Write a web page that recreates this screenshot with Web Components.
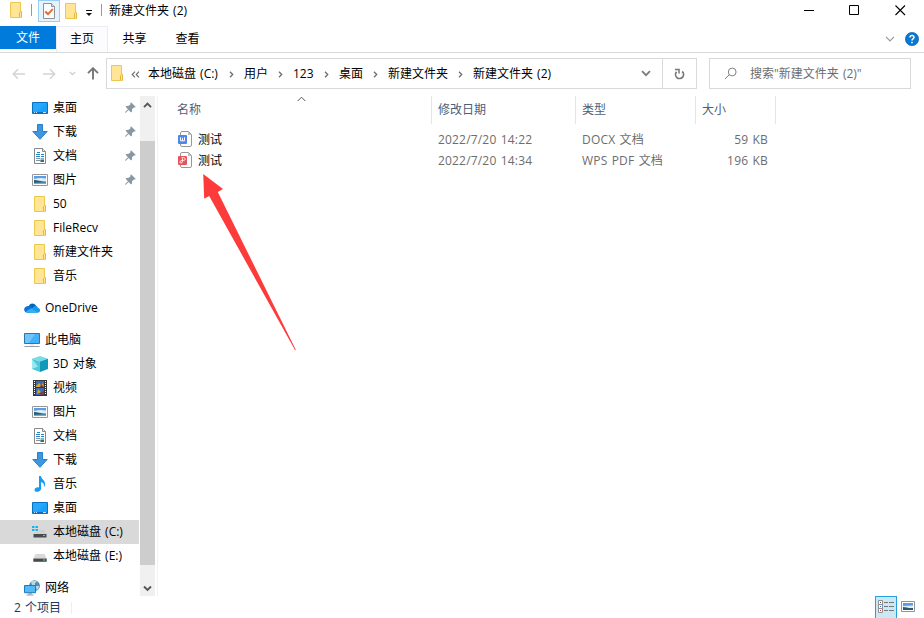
<!DOCTYPE html>
<html lang="zh-CN">
<head>
<meta charset="utf-8">
<title>新建文件夹 (2)</title>
<style>
  html, body { margin: 0; height: 100%; overflow: hidden; background: #fff; }
  body { font: 12px/16px "Open Sans", "Noto Sans CJK SC", sans-serif; word-spacing: 1px; color: #000; }
</style>
</head>
<body>
<file-explorer></file-explorer>

<script>
  const folder = `<path d="M2.500.5h10v9.500l1 .8v4.700h-11z" fill="#ffe595" stroke="#edc84f"/><path d="M11.500 15v-4.500l1-1h1v6" fill="#ffe595" stroke="#e3b93c"/>`;
  const pages = `<path d="M2.500.5h8l3 3v12h-11z" fill="#fff" stroke="#85898c"/><path d="M10.500.5v3h3" fill="#e8e8e8" stroke="#85898c"/><path d="M4 6.500h4M5 4.500h3M4 8.500h4M9 6.500h3M9 8.500h3" stroke="#2585c7"/><path d="M4 10.500h4M4 12.500h4" stroke="#87939b"/><path d="M8.500 10h3.500v4H8.500z" fill="#78b7dc"/><path d="M8.500 12h3.500v2H8.500z" fill="#3c6f6b"/>`;
  const picture = `<path d="M.5 2.500h15v11H.5z" fill="#fff" stroke="#979797"/><path d="M2 4h12v8H2z" fill="#dceefa"/><path d="M2 4h12v2.500C9 5.500 6 6 2 7z" fill="#5e9be2"/><path d="M2 8c4 0 6 1.500 12 1.500V12H2z" fill="#2d6273"/><path d="M2 11c4-.7 8-.7 12-.5V12H2z" fill="#69aedb"/>`;

  // [viewBox width, viewBox height, markup]
  const ICONS = {
    folder: [16, 16, folder],
    desktop: [16, 16, `<path d="M.5 2.500h15v11H.5z" fill="#1aa1fa" stroke="#0873bd"/><path d="M2 3h12L5 12H1V3z" fill="#35b0ff" opacity=".5"/><path d="M1 12.500h14" stroke="#0a6fc0"/><path d="M2 12.500h1m1 0h1m6 0h3" stroke="#bce4ff"/>`],
    download: [16, 16, `<path d="M5.500.5h5v7h4.700L8 15.300.8 7.500h4.700z" fill="#3c96e0" stroke="#2a7fca"/>`],
    document: [16, 16, pages],
    picture: [16, 16, picture],
    onedrive: [16, 16, `<path d="M4.500 6.700C5.500 3 10 2 12 5.800l-2.500 4z" fill="#0864b8"/><path d="M3.800 12.800C-.8 12.800-1 7 3 6.300c2-.8 3.800 0 5 1l4 3-2 2z" fill="#0f76cf"/><path d="M9 7.500c2-2.600 4.500-1.800 4.700.2C17 8.200 16.700 12.800 13.500 12.800H3.300C3.500 10.500 6 9.200 9 7.500z" fill="#1f96e6"/><path d="M2 12c1-2 4-2.700 5.500-3.500l6.500 4c-2 .5-7 .4-10 .3z" fill="#2fb1f2"/>`],
    computer: [16, 16, `<path d="M.5 1.500h15v10H.5z" fill="#45b1fa" stroke="#2878ad"/><path d="M1 2h10l-6 9H1z" fill="#8ad0fb" opacity=".6"/><path d="M6 12h4v1.500H6z" fill="#dfe6ea"/><path d="M.5 14.500h15" stroke="#8f9da6"/>`],
    cube: [16, 16, `<path d="M8 0l8 2.800L8 5.500 0 2.800z" fill="#78dce6"/><path d="M0 2.800l8 2.700V16l-8-3z" fill="#50c9d6"/><path d="M16 2.800L8 5.500V16l8-3z" fill="#1298bb"/><path d="M0 3l6 7.500L0 13z" fill="#9ce8ef"/>`],
    video: [16, 16, `<path d="M1 0h14v16H1z" fill="#373737"/><path d="M4 1h8v6H4z" fill="#3d6ab7"/><path d="M4 8h8v7H4z" fill="#396db4"/><path d="M4 6l3-3 2 2 2-2 1 4H4zM6 9l3 3-4 2z" fill="#d6a62f"/><path d="M9 4l3 3H8zM8 13l4-2v4H8z" fill="#793f44"/><path d="M2.500 1v14M13.500 1v14" stroke="#fff" stroke-dasharray="1 1"/>`],
    music: [16, 16, `<path d="M7 0h2c.3 3.500 4.500 4 4 9-.3 1.400-.8 1.800-1.200 2C12.500 8 11 6.500 9 6v7c-.3 3-6 4-6.500 1.300C2.400 12 5 11 7 11.500z" fill="#169cf3"/>`],
    sysdrive: [16, 16, `<path d="M0 2h2.500v2H0zM3.500 2H6v2H3.500zM0 5h2.500v2H0zM3.500 5H6v2H3.500z" fill="#17b3ef"/><path d="M6.500 6h6l2 4h-13L3 8h3.500z" fill="#cfd1d2"/><path d="M1.500 10h13v3.500h-13z" fill="#484c4e"/><path d="M11 11.500h2" stroke="#4fdc74"/>`],
    drive: [16, 16, `<path d="M3.500 6h9l2 4.500h-13z" fill="#d7d9da"/><path d="M1.300 10.500h13.400v3.300H1.300z" fill="#484b4d"/><path d="M11 12h2" stroke="#4fdc74"/>`],
    network: [16, 16, `<circle cx="10.500" cy="5.700" r="5.400" fill="#4f8cb4"/><path d="M7 2c2-2 5-1 6 0l-2 1v2H8zM11 6h4c0 2-1 3-2 4z" fill="#bbd9e1"/><path d="M.5 5.500h11v7.200H.5z" fill="#53bafa" stroke="#1e7bbb"/><path d="M4 13h4v1.500H4z" fill="#9bb1bd"/><path d="M2.500 15h7" stroke="#8aa0ad"/>`],
    pin: [11, 11, `<path d="M6 .2L10.800 5l-1 .6-1-.1-1.700 1.800-.1 2.200-.9.900L3.600 7.900.8 10.700H.2v-.6L3 7.300.6 4.800l.9-.9 2.200-.1L5.500 2.200 5.400 1z" fill="#8798a4"/>`],
    check: [12, 16, `<path d="M.5.5h8l3 3v12H.5z" fill="#f9fafb" stroke="#8b9297"/><path d="M8.500.5v3h3" fill="#ddd" stroke="#8b9297"/><path d="M2.300 8.500L5 11.200 9.800 6" fill="none" stroke="#e96325" stroke-width="1.800"/>`],
    caret: [7, 7, `<path d="M0 1.500h6" stroke="#111"/><path d="M0 4h6L3 7z" fill="#111"/>`],
    back: [14, 12, `<path d="M13 6H1.500M6 1.300L1.300 6 6 10.700" fill="none" stroke="#d4d4d4" stroke-width="1.500"/>`],
    forward: [14, 12, `<path d="M1 6h11.500M8 1.300L12.700 6 8 10.700" fill="none" stroke="#d4d4d4" stroke-width="1.500"/>`],
    up: [12, 13, `<path d="M6 12.500V1.500M1 6.200L6 1.200l5 5" fill="none" stroke="#767676" stroke-width="1.900"/>`],
    tiny: [7, 5, `<path d="M.7.8l2.800 2.900L6.300.8" fill="none" stroke="#cacaca" stroke-width="1.200"/>`],
    crumb: [5, 7, `<path d="M1 .8l2.700 2.700L1 6.200" fill="none" stroke="#6e6e6e" stroke-width="1.300"/>`],
    more: [9, 7, `<path d="M4 .7L1.200 3.500 4 6.300M8 .7L5.200 3.500 8 6.300" fill="none" stroke="#6a6a6a" stroke-width="1.100"/>`],
    drop: [10, 7, `<path d="M1 1.200l4 4 4-4" fill="none" stroke="#7c7c7c" stroke-width="1.800"/>`],
    thindrop: [10, 6, `<path d="M1 .8l4 4 4-4" fill="none" stroke="#999" stroke-width="1.200"/>`],
    refresh: [11, 12, `<path d="M8.200 3.500A4 4 0 1 1 2.500 3.900" fill="none" stroke="#767676" stroke-width="1.700"/><path d="M1 1.500h4v4" fill="none" stroke="#767676" stroke-width="1.500"/>`],
    search: [14, 14, `<circle cx="8.200" cy="5" r="3.900" fill="none" stroke="#808080"/><path d="M5.300 7.800L1 12" stroke="#808080"/>`],
    help: [14, 14, `<circle cx="7" cy="7" r="6.600" fill="#0878d2" stroke="#0863b2" stroke-width=".7"/><path d="M5 5.500c0-2.900 4.200-2.600 4 0C8.900 6.900 7 6.900 7 8.500M7 9.700v1.500" fill="none" stroke="#fff" stroke-width="1.500"/>`],
    minimize: [11, 11, `<path d="M1 5.500h10" stroke="#000"/>`],
    maximize: [11, 11, `<path d="M.5.500h9v9h-9z" fill="none" stroke="#000"/>`],
    close: [11, 11, `<path d="M.5.500l9.500 9.500M10 .5L.5 10" stroke="#000" stroke-width="1.100"/>`],
    sort: [9, 6, `<path d="M.7 5l3.800-3.800L8.300 5" fill="none" stroke="#555"/>`],
    scrollup: [9, 7, `<path d="M1 5.200l3.500-3.500L8 5.200" fill="none" stroke="#555" stroke-width="1.900"/>`],
    scrolldown: [9, 7, `<path d="M1 1.500L4.500 5 8 1.500" fill="none" stroke="#555" stroke-width="1.900"/>`],
    docx: [15, 16, `<path d="M2.500 4V2q0-1.500 1.500-1.500h6.500l3 3v10.500q0 1.500-1.500 1.500H4q-1.500 0-1.500-1.500v-1" fill="#fff" stroke="#979797"/><path d="M10 .5v3.500h3.500z" fill="#bbb"/><rect y="4" width="9" height="9" rx="1" fill="#4c87ef"/><path d="M2.500 6.200v3.600h4V6.200M4.500 6.800v3" fill="none" stroke="#fff"/>`],
    pdf: [15, 16, `<path d="M2.500 4V2q0-1.500 1.500-1.500h6.500l3 3v10.500q0 1.500-1.500 1.500H4q-1.500 0-1.500-1.500v-1" fill="#fff" stroke="#979797"/><path d="M10 .5v3.500h3.500z" fill="#bbb"/><rect y="4" width="9" height="9" rx="1" fill="#e9545b"/><path d="M3.500 5.700h2.200c2 0 2 2.700 0 2.700H4.500C1.500 8.500 1.300 11 3 11s1.500-2 1.500-4.500" fill="none" stroke="#fff" stroke-width=".9"/>`],
    details: [16, 14, `<path d="M.5.500h4v12h-4zM.5 4.500h4M.5 8.500h4" fill="#fff" stroke="#929292"/><path d="M2 2.500h1" stroke="#555"/><path d="M2 6.500h1" stroke="#2a70df"/><path d="M2 10.500h1" stroke="#d52d2d"/><path d="M6 2.500h4m1 0h5M6 6.500h4m1 0h5M6 10.500h4m1 0h5" stroke="#777"/>`],
    thumbs: [14, 11, `<path d="M.5.500h13v10H.5z" fill="#fff" stroke="#929292"/><path d="M2 2h10v7H2z" fill="#deedf8"/><path d="M2 2h10v2.500L2 5z" fill="#5b9de4"/><path d="M2 6c3 0 5 1.300 10 1v2H2z" fill="#31566d"/>`]
  };

  class UiIcon extends HTMLElement {
    connectedCallback() {
      const [w, h, body] = ICONS[this.getAttribute('name')];
      this.attachShadow({ mode: 'open' }).innerHTML = `
        <style>
          :host { display: block; flex: none; width: ${w}px; height: ${h}px; }
          svg { display: block; }
        </style>
        <svg width="${w}" height="${h}" viewBox="0 0 ${w} ${h}">${body}</svg>`;
    }
  }
  customElements.define('ui-icon', UiIcon);

  class TitleBar extends HTMLElement {
    connectedCallback() {
      this.attachShadow({ mode: 'open' }).innerHTML = `
        <style>
          :host { display: flex; height: 26px; align-items: flex-start; }
          .quick { display: flex; flex: 1; height: 22px; align-items: center; padding-left: 8px; }
          .sep { width: 1px; height: 12px; margin-bottom: 2px; background: #999; }
          .sep.first { margin-left: 7px; margin-right: 6px; }
          .props { display: flex; width: 20px; height: 20px; border: 1px solid #99cdf5; background: #e6f3fd; align-items: center; justify-content: center; }
          .props + ui-icon { margin: 0 7px 0 3px; }
          .sep.last { margin-left: 8px; margin-right: 7px; }
          .buttons { display: flex; gap: 35px; padding: 5px 18px 0 0; }
        </style>
        <div class="quick">
          <ui-icon name="folder" style="margin-bottom:2px"></ui-icon>
          <span class="sep first"></span>
          <span class="props"><ui-icon name="check"></ui-icon></span>
          <ui-icon name="folder"></ui-icon>
          <ui-icon name="caret" style="margin-top:2px"></ui-icon>
          <span class="sep last"></span>
          <slot></slot>
        </div>
        <div class="buttons">
          <ui-icon name="minimize"></ui-icon>
          <ui-icon name="maximize"></ui-icon>
          <ui-icon name="close"></ui-icon>
        </div>`;
    }
  }
  customElements.define('title-bar', TitleBar);

  class RibbonTabs extends HTMLElement {
    connectedCallback() {
      this.attachShadow({ mode: 'open' }).innerHTML = `
        <style>
          :host { display: flex; height: 26px; border-bottom: 1px solid #dadada; }
          span { height: 26px; line-height: 25px; text-align: center; }
          .file { width: 56px; height: 23px; line-height: 24px; background: #007bdc; color: #fff; }
          .active { width: 50px; height: 25px; line-height: 24px; border: 1px solid #ebebf2; border-bottom: 0; background: #fcfcfe; }
          .tab { width: 53px; }
          .end { display: flex; flex: 1; justify-content: flex-end; align-items: center; gap: 10px; padding-right: 5px; }
        </style>
        <span class="file">文件</span>
        <span class="active">主页</span>
        <span class="tab">共享</span>
        <span class="tab">查看</span>
        <div class="end"><ui-icon name="thindrop"></ui-icon><ui-icon name="help"></ui-icon></div>`;
    }
  }
  customElements.define('ribbon-tabs', RibbonTabs);

  class AddressBar extends HTMLElement {
    connectedCallback() {
      const crumbs = [['本地磁盘 (C:)', 71], ['用户', 24], ['123', 21], ['桌面', 24], ['新建文件夹', 60], ['新建文件夹 (2)', 80]];
      this.attachShadow({ mode: 'open' }).innerHTML = `
        <style>
          :host { display: flex; height: 43px; box-sizing: border-box; padding: 5px 13px 0 12px; }
          .nav { display: flex; width: 94px; height: 31px; align-items: center; }
          .box, .search { display: flex; box-sizing: border-box; height: 31px; border: 1px solid #d9d9d9; align-items: center; }
          .box { width: 591px; padding-left: 2px; }
          .crumbs { display: flex; flex: 1; align-items: center; white-space: nowrap; }
          .crumbs ui-icon { margin: 1px 10px 0; }
          .refresh { display: flex; width: 33px; height: 29px; margin-left: 11px; border-left: 1px solid #d9d9d9; align-items: center; justify-content: center; }
          .search { width: 202px; margin-left: 12px; padding-left: 14px; gap: 12px; color: #6d6d6d; }
        </style>
        <div class="nav">
          <ui-icon name="back"></ui-icon>
          <ui-icon name="forward" style="margin-left:16px"></ui-icon>
          <ui-icon name="tiny" style="margin-left:13px"></ui-icon>
          <ui-icon name="up" style="margin-left:11px"></ui-icon>
        </div>
        <div class="box">
          <ui-icon name="folder" style="margin-bottom:1px"></ui-icon>
          <ui-icon name="more" style="margin:1px 8px 0 6px"></ui-icon>
          <div class="crumbs">${crumbs.map(([text, w], i) => (i ? '<ui-icon name="crumb"></ui-icon>' : '') + `<span style="width:${w}px">${text}</span>`).join('')}</div>
          <ui-icon name="drop"></ui-icon>
          <span class="refresh"><ui-icon name="refresh"></ui-icon></span>
        </div>
        <div class="search"><ui-icon name="search"></ui-icon><span>搜索"新建文件夹 (2)"</span></div>`;
    }
  }
  customElements.define('address-bar', AddressBar);

  class NavItem extends HTMLElement {
    connectedCallback() {
      this.attachShadow({ mode: 'open' }).innerHTML = `
        <style>
          :host { display: flex; flex: none; box-sizing: border-box; height: 24px; align-items: center; padding-left: 32px; }
          :host([root]) { padding-left: 24px; margin-top: 8px; }
          :host([selected]) { background: #d9d9d9; }
          .label { flex: 1; margin-left: 5px; white-space: nowrap; }
          .pin { margin: 0 3px 1px 0; }
        </style>
        <ui-icon name="${this.getAttribute('icon')}"></ui-icon>
        <span class="label"><slot></slot></span>
        ${this.hasAttribute('pinned') ? '<ui-icon class="pin" name="pin"></ui-icon>' : ''}`;
    }
  }
  customElements.define('nav-item', NavItem);

  class NavPane extends HTMLElement {
    connectedCallback() {
      this.attachShadow({ mode: 'open' }).innerHTML = `
        <style>
          :host { display: flex; width: 157px; height: 500px; border-right: 1px solid #f2f2f2; overflow: hidden; }
          .tree { display: flex; flex-direction: column; width: 139px; }
          .scroll { display: flex; flex-direction: column; width: 15px; margin-left: 1px; background: #f0f0f0; align-items: center; padding: 6px 0 4px; box-sizing: border-box; }
          .thumb { width: 15px; height: 424px; margin: 32px 0 auto; background: #cdcdcd; }
        </style>
        <div class="tree"><slot></slot></div>
        <div class="scroll">
          <ui-icon name="scrollup"></ui-icon>
          <div class="thumb"></div>
          <ui-icon name="scrolldown"></ui-icon>
        </div>`;
    }
  }
  customElements.define('nav-pane', NavPane);

  class FileList extends HTMLElement {
    connectedCallback() {
      this.attachShadow({ mode: 'open' }).innerHTML = `
        <style>
          :host { display: block; flex: 1; }
          .head { display: grid; grid-template-columns: 274px 144px 120px 80px; height: 27px; margin-bottom: 6px; line-height: 28px; color: #4c607a; }
          .head span { padding-left: 6px; border-right: 1px solid #e5e5e5; }
          .head .name { display: flex; padding-left: 19px; }
          .name ui-icon { margin-left: 96px; }
        </style>
        <div class="head">
          <span class="name">名称<ui-icon name="sort"></ui-icon></span>
          <span>修改日期</span><span>类型</span><span>大小</span>
        </div>
        <slot></slot>`;
    }
  }
  customElements.define('file-list', FileList);

  class FileRow extends HTMLElement {
    connectedCallback() {
      const attr = name => this.getAttribute(name);
      this.attachShadow({ mode: 'open' }).innerHTML = `
        <style>
          :host { display: grid; grid-template-columns: 280px 144px 120px 66px; height: 21px; align-items: center; color: #6d6d6d; letter-spacing: .18px; }
          .name { display: flex; align-items: center; gap: 5px; padding-left: 20px; color: #000; letter-spacing: 0; }
          .name ui-icon { margin-bottom: 2px; }
          .size { text-align: right; }
        </style>
        <span class="name"><ui-icon name="${attr('icon')}"></ui-icon><slot></slot></span>
        <span>${attr('date')}</span>
        <span>${attr('type')}</span>
        <span class="size">${attr('size')}</span>`;
    }
  }
  customElements.define('file-row', FileRow);

  class StatusBar extends HTMLElement {
    connectedCallback() {
      this.attachShadow({ mode: 'open' }).innerHTML = `
        <style>
          :host { display: flex; height: 22px; padding-left: 14px; color: #1e395b; align-items: center; }
          .count { flex: 1; padding-top: 1px; }
          .count span { display: inline-block; width: 57px; border-right: 1px solid #eee; height: 12px; line-height: 12px; }
          .details { display: flex; width: 20px; height: 21px; border: 1px solid #26a0da; background: #cbe8f6; align-items: center; justify-content: center; }
          .thumbs { margin: 0 9px 1px 4px; }
        </style>
        <div class="count"><span><slot></slot></span></div>
        <div class="details"><ui-icon name="details"></ui-icon></div>
        <ui-icon class="thumbs" name="thumbs"></ui-icon>`;
    }
  }
  customElements.define('status-bar', StatusBar);

  // red annotation drawn over the window
  class PointerArrow extends HTMLElement {
    connectedCallback() {
      this.attachShadow({ mode: 'open' }).innerHTML = `
        <style>
          :host { display: block; position: absolute; left: 203px; top: 174px; }
          svg { display: block; }
        </style>
        <svg width="94" height="177" viewBox="0 0 94 177"><path d="M.2 0L20 15 14.800 18 93 176.300 92 176 6.200 22 1.200 24.800z" fill="#fe3b3b"/></svg>`;
    }
  }
  customElements.define('pointer-arrow', PointerArrow);

  class FileExplorer extends HTMLElement {
    connectedCallback() {
      this.attachShadow({ mode: 'open' }).innerHTML = `
        <style>
          :host { display: flex; flex-direction: column; width: 924px; height: 618px; overflow: hidden; position: relative; }
          .main { display: flex; height: 500px; }
        </style>
        <title-bar>新建文件夹 (2)</title-bar>
        <ribbon-tabs></ribbon-tabs>
        <address-bar></address-bar>
        <div class="main">
          <nav-pane>
            <nav-item icon="desktop" pinned>桌面</nav-item>
            <nav-item icon="download" pinned>下载</nav-item>
            <nav-item icon="document" pinned>文档</nav-item>
            <nav-item icon="picture" pinned>图片</nav-item>
            <nav-item icon="folder">50</nav-item>
            <nav-item icon="folder">FileRecv</nav-item>
            <nav-item icon="folder">新建文件夹</nav-item>
            <nav-item icon="folder">音乐</nav-item>
            <nav-item icon="onedrive" root>OneDrive</nav-item>
            <nav-item icon="computer" root>此电脑</nav-item>
            <nav-item icon="cube">3D 对象</nav-item>
            <nav-item icon="video">视频</nav-item>
            <nav-item icon="picture">图片</nav-item>
            <nav-item icon="document">文档</nav-item>
            <nav-item icon="download">下载</nav-item>
            <nav-item icon="music">音乐</nav-item>
            <nav-item icon="desktop">桌面</nav-item>
            <nav-item icon="sysdrive" selected>本地磁盘 (C:)</nav-item>
            <nav-item icon="drive">本地磁盘 (E:)</nav-item>
            <nav-item icon="network" root>网络</nav-item>
          </nav-pane>
          <file-list>
            <file-row icon="docx" date="2022/7/20 14:22" type="DOCX 文档" size="59 KB">测试</file-row>
            <file-row icon="pdf" date="2022/7/20 14:34" type="WPS PDF 文档" size="196 KB">测试</file-row>
          </file-list>
        </div>
        <status-bar>2 个项目</status-bar>
        <pointer-arrow></pointer-arrow>`;
    }
  }
  customElements.define('file-explorer', FileExplorer);
</script>
</body>
</html>
